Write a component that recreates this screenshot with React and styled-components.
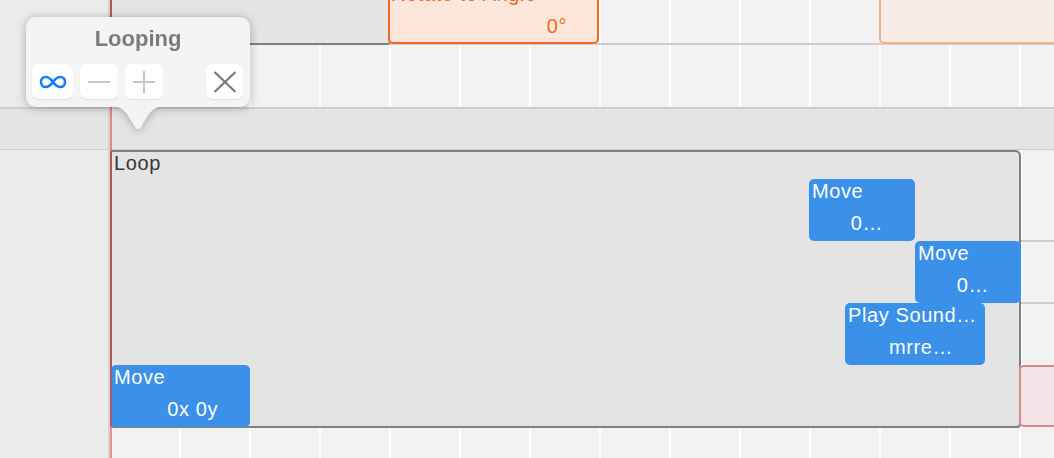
import React from 'react';
import styled, { createGlobalStyle, css } from 'styled-components';

const GlobalStyle = createGlobalStyle`
  html, body { margin: 0; padding: 0; background: #f2f2f2; }
  body { font-family: "Liberation Sans", Arial, sans-serif; }
`;

const CELL = 70;

const gridBg = css`
  background-color: #f2f2f2;
  background-image: linear-gradient(to right, #ffffff 2px, transparent 2px);
  background-size: ${CELL}px 100%;
  background-position: -1px 0;
`;

const Screen = styled.div`
  position: relative;
  display: flex;
  width: 1054px;
  height: 458px;
  overflow: hidden;
  font-family: "Liberation Sans", Arial, sans-serif;
`;

const Gutter = styled.div`
  flex: none;
  width: 110px;
  box-sizing: border-box;
  border-right: 2px solid #d3d3d3;
  display: flex;
  flex-direction: column;
  background: #ebebeb;
`;

const GutterTop = styled.div`
  flex: none;
  height: 109px;
  box-sizing: border-box;
  border-bottom: 2px solid #cfcfcf;
`;

const GutterBand = styled.div`
  flex: none;
  height: 41px;
  box-sizing: border-box;
  background: #e4e4e4;
  border-bottom: 1px solid #cfcfcf;
`;

const Timeline = styled.div`
  flex: 1;
  min-width: 0;
  display: flex;
  flex-direction: column;
`;

const Lane = styled.div`
  position: relative;
  flex: none;
  height: ${p => p.$h}px;
  box-sizing: border-box;
  border-bottom: 2px solid #cdcdcd;
  ${gridBg}
`;

const Band = styled.div`
  flex: none;
  height: 41px;
  box-sizing: border-box;
  background: #e4e4e4;
  border-bottom: 1px solid #cfcfcf;
`;

const LoopLane = styled.div`
  position: relative;
  flex: none;
  height: 278px;
  display: flex;
`;

const LoopBox = styled.div`
  position: relative;
  flex: none;
  width: 911px;
  box-sizing: border-box;
  background: #e4e4e4;
  box-shadow: inset 0 0 0 2px #7f7f7f;
  border-radius: 3px 6px 4px 4px;
`;

const LoopLabel = styled.div`
  padding: 1px 0 0 4px;
  font-size: 20px;
  line-height: 24px;
  letter-spacing: 0.6px;
  color: #363636;
`;

const SideTracks = styled.div`
  flex: 1;
  display: flex;
  flex-direction: column;
  ${gridBg}
`;

const SideRow = styled.div`
  flex: ${p => (p.$h ? 'none' : '1')};
  height: ${p => (p.$h ? `${p.$h}px` : 'auto')};
  box-sizing: border-box;
  border-bottom: ${p => (p.$line ? '2px solid #cdcdcd' : 'none')};
`;

const BottomLane = styled.div`
  flex: 1;
  ${gridBg}
`;

const LoopTail = styled.div`
  position: absolute;
  left: 0;
  top: -20px;
  width: 282px;
  height: 65px;
  background: #e4e4e4;
  box-shadow: inset 0 0 0 2px #7f7f7f;
  border-radius: 5px;
`;

const tones = {
  blue: { bg: '#3b91ea', fg: '#ffffff', ring: 'transparent' },
  orange: { bg: '#fee7da', fg: '#f26a1f', ring: '#f26a1f' },
  orangeMuted: { bg: '#f7ece6', fg: '#f4a67a', ring: '#f4b189' },
  pink: { bg: '#f2e4e6', fg: '#d9868c', ring: '#dc8a90' },
};

const Clip = styled.div`
  position: absolute;
  left: ${p => p.$x}px;
  top: ${p => p.$y}px;
  width: ${p => p.$w}px;
  height: 62px;
  box-sizing: border-box;
  border-radius: 5px;
  background: ${p => tones[p.$tone].bg};
  box-shadow: inset 0 0 0 2px ${p => tones[p.$tone].ring};
  color: ${p => tones[p.$tone].fg};
  display: flex;
  flex-direction: column;
  padding: 0 32px 0 3px;
  font-size: 20px;
  line-height: 24px;
  letter-spacing: 0.6px;
  white-space: nowrap;
  z-index: 2;
`;

const ClipTitle = styled.div`
  text-align: left;
`;

const ClipValue = styled.div`
  margin-top: 8px;
  text-align: right;
`;

const Playhead = styled.div`
  position: absolute;
  left: 110px;
  top: 0;
  bottom: 0;
  width: 2px;
  background: rgba(232, 52, 58, 0.55);
  z-index: 5;
`;

const Popover = styled.div`
  position: absolute;
  left: 26px;
  top: 17px;
  width: 224px;
  z-index: 10;
  filter: drop-shadow(0 1px 5px rgba(0, 0, 0, 0.28));
`;

const PopoverBody = styled.div`
  box-sizing: border-box;
  height: 90px;
  padding-top: 9px;
  background: #f4f4f4;
  border-radius: 10px;
`;

const PopoverTitle = styled.div`
  text-align: center;
  font-size: 22px;
  line-height: 26px;
  font-weight: 700;
  color: #7b7b7b;
`;

const ButtonRow = styled.div`
  display: flex;
  gap: 7px;
  margin-top: 12px;
  padding: 0 7px 0 6px;
`;

const IconButton = styled.div`
  flex: none;
  width: ${p => p.$w}px;
  height: 35px;
  margin-left: ${p => (p.$push ? 'auto' : '0')};
  display: flex;
  align-items: center;
  justify-content: center;
  background: #ffffff;
  border-radius: 7px;
  box-shadow: 0 1px 1px rgba(0, 0, 0, 0.08);
`;

const Arrow = styled.svg`
  position: absolute;
  left: 84px;
  top: 89px;
  display: block;
`;

const InfinityIcon = () => (
  <svg width="28" height="14" viewBox="0 0 28 14">
    <path
      d="M14 7 C11.5 3.5 9 2 6.5 2 C3.8 2 2 4.2 2 7 C2 9.8 3.8 12 6.5 12 C9 12 11.5 10.5 14 7 C16.5 3.5 19 2 21.5 2 C24.2 2 26 4.2 26 7 C26 9.8 24.2 12 21.5 12 C19 12 16.5 10.5 14 7 Z"
      fill="none"
      stroke="#157efb"
      strokeWidth="2.6"
    />
  </svg>
);

const MinusIcon = () => (
  <svg width="24" height="24" viewBox="0 0 24 24">
    <line x1="1" y1="12" x2="23" y2="12" stroke="#c6c6c6" strokeWidth="2" />
  </svg>
);

const PlusIcon = () => (
  <svg width="24" height="24" viewBox="0 0 24 24">
    <line x1="1" y1="12" x2="23" y2="12" stroke="#c6c6c6" strokeWidth="2" />
    <line x1="12" y1="1" x2="12" y2="23" stroke="#c6c6c6" strokeWidth="2" />
  </svg>
);

const CloseIcon = () => (
  <svg width="24" height="22" viewBox="0 0 24 22">
    <line x1="1.5" y1="1" x2="22.5" y2="21" stroke="#7a7a7a" strokeWidth="2.2" />
    <line x1="22.5" y1="1" x2="1.5" y2="21" stroke="#7a7a7a" strokeWidth="2.2" />
  </svg>
);

const loopClips = [
  { x: 699, y: 29, w: 106, title: 'Move', value: '0…' },
  { x: 805, y: 91, w: 106, title: 'Move', value: '0…' },
  { x: 735, y: 153, w: 140, title: 'Play Sound…', value: 'mrre…' },
  { x: 1, y: 215, w: 139, title: 'Move', value: '0x 0y' },
];

export default function App() {
  return (
    <>
      <GlobalStyle />
      <Screen>
        <Gutter>
          <GutterTop />
          <GutterBand />
        </Gutter>
        <Timeline>
          <Lane $h={45}>
            <LoopTail />
            <Clip $tone="orange" $x={278} $y={-18} $w={211}>
              <ClipTitle>Rotate to Angle</ClipTitle>
              <ClipValue>0°</ClipValue>
            </Clip>
            <Clip $tone="orangeMuted" $x={769} $y={-18} $w={300} />
          </Lane>
          <Lane $h={64} />
          <Band />
          <LoopLane>
            <LoopBox>
              <LoopLabel>Loop</LoopLabel>
              {loopClips.map((c, i) => (
                <Clip key={i} $tone="blue" $x={c.x} $y={c.y} $w={c.w}>
                  <ClipTitle>{c.title}</ClipTitle>
                  <ClipValue>{c.value}</ClipValue>
                </Clip>
              ))}
            </LoopBox>
            <SideTracks>
              <SideRow $h={92} $line />
              <SideRow $h={62} $line />
              <SideRow />
            </SideTracks>
            <Clip $tone="pink" $x={909} $y={215} $w={200} />
          </LoopLane>
          <BottomLane />
        </Timeline>
        <Playhead />
        <Popover>
          <PopoverBody>
            <PopoverTitle>Looping</PopoverTitle>
            <ButtonRow>
              <IconButton $w={41}><InfinityIcon /></IconButton>
              <IconButton $w={38}><MinusIcon /></IconButton>
              <IconButton $w={38}><PlusIcon /></IconButton>
              <IconButton $w={37} $push><CloseIcon /></IconButton>
            </ButtonRow>
          </PopoverBody>
          <Arrow width="56" height="26" viewBox="0 0 56 26">
            <path
              d="M0 0 C8 0 12 2 17 8 L25 21 Q28 25.5 31 21 L39 8 C44 2 48 0 56 0 Z"
              fill="#f4f4f4"
            />
          </Arrow>
        </Popover>
      </Screen>
    </>
  );
}
